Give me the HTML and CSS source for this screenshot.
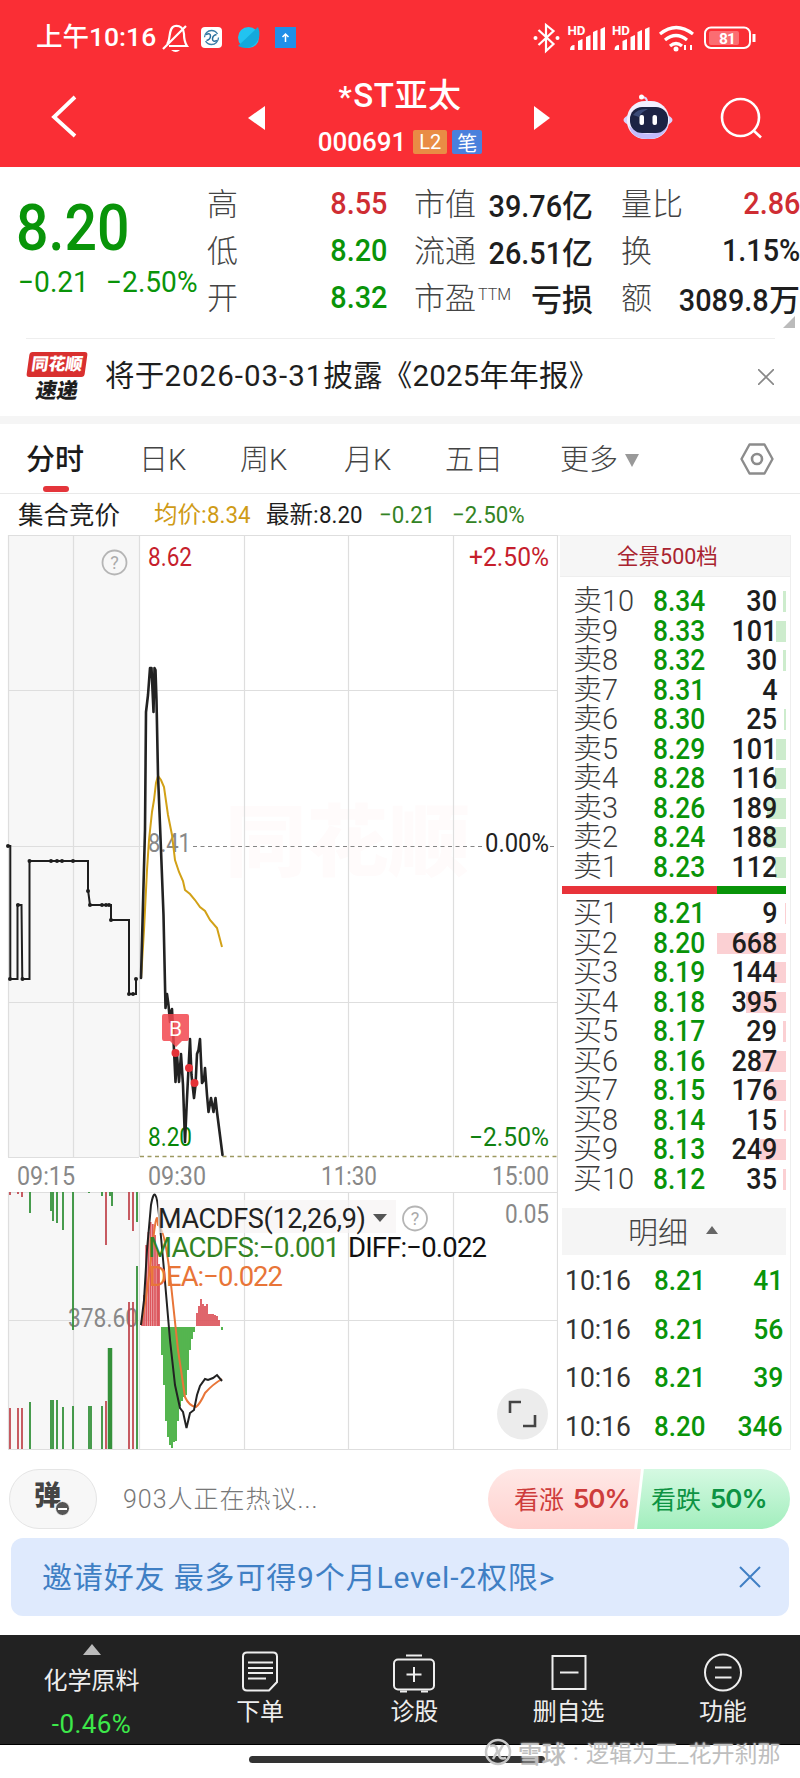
FILE: index.html
```html
<!DOCTYPE html>
<html lang="zh-CN">
<head>
<meta charset="utf-8">
<title>*ST亚太 000691</title>
<link rel="stylesheet" href="styles.css">
</head>
<body>
<header class="top">
  <div class="status">
    <span class="clock">上午10:16</span>
    <svg class="status-left" width="138" height="32" viewBox="160 22 138 32">
      <path d="M167 44c4-4 1-17 8-18q8-1 9 8c0 6 1 9 3 12H169M163 49l23-23" fill="none" stroke="#fff" stroke-width="2.2"/>
      <path d="M171 50h9q-4 4-9 0z" fill="#fff"/>
      <rect x="201" y="27" width="21" height="21" rx="4" fill="#fff"/>
      <circle cx="211.500" cy="37.500" r="7" fill="none" stroke="#3c7fa8" stroke-width="1.300" stroke-dasharray="18 4"/>
      <path d="M206 34.500q4.500-2 4.500 1.500t-4 4.500M217 40.500q-4.500 2-4.500-1.500t4-4.500" fill="none" stroke="#2a6f9c" stroke-width="1.500"/>
      <circle cx="248.500" cy="37.500" r="10.500" fill="#22c3f0"/>
      <path d="M238 46L258 27q4 10-3 17t-17 2z" fill="#13a9dc"/>
      <rect x="275" y="27" width="21" height="21" fill="#1f8fe8"/>
      <path d="M285.500 42v-8M282.500 37l3-3 3 3" fill="none" stroke="#fff" stroke-width="1.500"/>
    </svg>
    <svg class="status-right" width="226" height="32" viewBox="532 22 226 32">
      <path d="M538.500 30l15 14-7.500 7V25l7.500 6-15 14" fill="none" stroke="#fff" stroke-width="2.200"/>
      <circle cx="535.500" cy="38" r="2" fill="#fff"/><circle cx="557.500" cy="38" r="2" fill="#fff"/>
      <g fill="#fff">
        <text x="567.500" y="35" font-size="12" font-weight="700" textLength="18" lengthAdjust="spacingAndGlyphs">HD</text>
        <text x="612" y="35" font-size="12" font-weight="700" textLength="18" lengthAdjust="spacingAndGlyphs">HD</text>
        <path id="sig" d="M570 50q0-5 4.500-5v5zM578 41q4-2 4.500-2v11H578zM586 37q4-2 4.500-2v15H586zM593 32q4-2 4.500-2v20H593zM600.500 29q4-2 4.500-2v23h-4.500z"/>
        <use href="#sig" x="44.500"/>
      </g>
      <g fill="none" stroke="#fff" stroke-width="3.200"><path d="M660 34q16-13 33 0M665 40q11-9 22 0M670 46q6-5 12 0"/></g>
      <circle cx="676" cy="49" r="2.500" fill="#fff"/>
      <path d="M685 45v5M691 45v5" stroke="#fff" stroke-width="2"/>
      <rect x="705" y="27.500" width="45" height="20.500" rx="6" fill="none" stroke="#fff" stroke-width="2"/>
      <rect x="709" y="31" width="30" height="14" rx="2" fill="#fff" opacity=".3"/>
      <path d="M754 34v8" stroke="#fff" stroke-width="3"/>
      <text x="719" y="43.500" font-size="15.500" font-weight="700" fill="#fff" textLength="17">81</text>
    </svg>
  </div>
  <div class="titlebar">
    <svg class="back" width="30" height="46" viewBox="50 94 30 46"><path d="M75 97L54 117l21 19" fill="none" stroke="#fff" stroke-width="3.800"/></svg>
    <svg class="prev" width="18" height="26" viewBox="0 0 18 26"><path d="M17 1v24L0 13z" fill="#fff"/></svg>
    <div class="name">
      <div class="stock"><span class="star">*</span>ST亚太</div>
      <div class="code"><span>000691</span><b class="l2">L2</b><b class="bi">笔</b></div>
    </div>
    <svg class="next" width="18" height="26" viewBox="0 0 18 26"><path d="M1 1v24L17 13z" fill="#fff"/></svg>
    <svg class="robot" width="50" height="48" viewBox="623 93 50 48">
      <path d="M647 102q0-5-5-5" fill="none" stroke="#dcd7ff" stroke-width="2"/><circle cx="641.500" cy="97" r="2.500" fill="#fff"/>
      <ellipse cx="648" cy="120" rx="24.500" ry="8" fill="#d8d5ff"/><rect x="627" y="101" width="42" height="38" rx="18" fill="#f2efff"/>
      <path d="M629 126q19 16 39-1-4 14-20 14t-19-13z" fill="#c3bcfb"/>
      <rect x="630" y="107" width="38" height="26" rx="12" fill="#1c2344"/><path d="M633 115q5-7 15-6-7 3-9 8z" fill="#3b4b78"/>
      <rect x="639.500" y="115" width="4.500" height="10" rx="2" fill="#fff"/><rect x="652.500" y="115" width="4.500" height="10" rx="2" fill="#fff"/>
    </svg>
    <svg class="search" width="44" height="44" viewBox="719 96 44 44"><g fill="none" stroke="#fff" stroke-width="2.600"><circle cx="740.500" cy="117.500" r="18.500"/><path d="M753 130l8 7.500"/></g></svg>
  </div>
</header>

<section class="quote">
  <div class="last"><div class="big"><span class="num">8.20</span></div>
    <div class="chg"><span class="num">−0.21</span><span class="num pct">−2.50%</span></div></div>
  <dl class="col c1">
    <div><dt>高</dt><dd class="red"><span class="num">8.55</span></dd></div>
    <div><dt>低</dt><dd class="green"><span class="num">8.20</span></dd></div>
    <div><dt>开</dt><dd class="green"><span class="num">8.32</span></dd></div>
  </dl>
  <dl class="col c2">
    <div><dt>市值</dt><dd><span class="num">39.76</span>亿</dd></div>
    <div><dt>流通</dt><dd><span class="num">26.51</span>亿</dd></div>
    <div><dt>市盈<sup>TTM</sup></dt><dd>亏损</dd></div>
  </dl>
  <dl class="col c3">
    <div><dt>量比</dt><dd class="red"><span class="num">2.86</span></dd></div>
    <div><dt>换</dt><dd><span class="num">1.15%</span></dd></div>
    <div><dt>额</dt><dd><span class="num">3089.8</span>万</dd></div>
  </dl>
  <i class="corner"></i>
</section>

<section class="notice">
  <div class="express"><span class="brand">同花顺</span><span class="fast">速递</span></div>
  <p>将于<span class="d1">2026-03-31</span>披露《2025年年报》</p>
  <svg width="16" height="16" viewBox="0 0 16 16"><path d="M0 0l16 16M16 0L0 16" stroke="#888" stroke-width="1.600"/></svg>
</section>

<nav class="tabs">
  <a class="on">分时</a><a>日K</a><a>周K</a><a>月K</a><a>五日</a><a>更多<i></i></a>
  <svg width="34" height="32" viewBox="0 0 34 32"><path d="M9.500 1.500h15L32.500 16l-8 14.500h-15L1.500 16z" fill="none" stroke="#8c8c8c" stroke-width="2.400" stroke-linejoin="round"/><circle cx="17" cy="16" r="5" fill="none" stroke="#8c8c8c" stroke-width="2.600"/></svg>
</nav>

<div class="info">
  <span class="auction">集合竞价</span><span class="avg">均价:<span class="num">8.34</span></span><span class="new">最新:<span class="num">8.20</span></span><span class="num g1">−0.21</span><span class="num g2">−2.50%</span>
</div>

<main class="market">
<svg class="chart" width="558" height="923" viewBox="0 527 558 923">
  <path d="M8 535h131.500v622H8zM8 1192h131.500v257H8z" fill="#f7f7f7"/>
  <text x="225" y="870" font-size="78" font-weight="900" fill="#fffbfb" textLength="245" lengthAdjust="spacingAndGlyphs">同花顺</text>
  <g fill="none" stroke="#dedede" stroke-width="1.200">
    <path d="M8 535.500h550M8 690.500h550M8 1002.500h550M8 1157.500h131M8 846.500h138M8 1192.500h550M8 1320.500h550M8 1449.500h550"/>
    <path d="M8.500 535v622M73.500 535v622M139.500 535v622M244.500 535v622M348.500 535v622M453.500 535v622M8.500 1192v257M73.500 1192v257M139.500 1192v257M244.500 1192v257M348.500 1192v257M453.500 1192v257M557.500 535v914"/>
  </g>
  <path d="M193 846.500h290M550 846.500h6" stroke="#858585" stroke-width="1.200" stroke-dasharray="4 3.500"/>
  <path d="M140 1156.500h417" stroke="#9d9960" stroke-width="1.400" stroke-dasharray="4 3.500"/>
  <g font-size="25.500">
    <text x="148" y="1146" fill="#078607" textLength="44" lengthAdjust="spacingAndGlyphs">8.20</text>
    <text x="148" y="566" fill="#c61e2c" textLength="44" lengthAdjust="spacingAndGlyphs">8.62</text>
    <text x="148" y="852" fill="#888" textLength="43" lengthAdjust="spacingAndGlyphs">8.41</text>
    <text x="469" y="566" fill="#c61e2c" textLength="80" lengthAdjust="spacingAndGlyphs">+2.50%</text>
    <text x="485" y="852" fill="#222" textLength="64" lengthAdjust="spacingAndGlyphs">0.00%</text>
    <text x="469" y="1146" fill="#118111" textLength="80" lengthAdjust="spacingAndGlyphs">−2.50%</text>
  </g>
  <g font-size="25" fill="#888">
    <text x="17" y="1185" textLength="58" lengthAdjust="spacingAndGlyphs">09:15</text>
    <text x="148" y="1185" textLength="58" lengthAdjust="spacingAndGlyphs">09:30</text>
    <text x="321" y="1185" textLength="56" lengthAdjust="spacingAndGlyphs">11:30</text>
    <text x="492" y="1185" textLength="57" lengthAdjust="spacingAndGlyphs">15:00</text>
    <text x="505" y="1223" textLength="44" lengthAdjust="spacingAndGlyphs">0.05</text>
    <text x="68" y="1327" textLength="70" lengthAdjust="spacingAndGlyphs">378.60</text>
  </g>
  <g fill="none" stroke="#b5b5b5" stroke-width="1.800"><circle cx="114.500" cy="562.500" r="12"/><circle cx="415" cy="1218.500" r="12"/></g>
  <g font-size="18" fill="#aaa" text-anchor="middle"><text x="114.500" y="569">?</text><text x="415" y="1225">?</text></g>
  <path d="M141 979L144 930 147 870 149 840 152 812 154 800 156 783 158 776 161 780 164 787 168 815 172 835 175 860 179 872 183 881 185 890 190 894 195 900 200 907 205 911 210 920 217 928 222 947" fill="none" stroke="#d2a117" stroke-width="2"/>
  <path d="M8 846h2.300v133h7.200v-74h4l.8 74h7.200V861H88v29l2 15h21v15h18v74h7v-15" fill="none" stroke="#1e1e1e" stroke-width="2"/>
  <g fill="#1e1e1e"><circle cx="8" cy="846" r="2"/><circle cx="10" cy="979" r="2"/><circle cx="18" cy="905" r="2"/><circle cx="22.500" cy="979" r="2"/><circle cx="29.500" cy="861" r="2"/><circle cx="51" cy="861" r="2"/><circle cx="57" cy="861" r="2"/><circle cx="62" cy="861" r="2"/><circle cx="73" cy="861" r="2"/><circle cx="88" cy="891" r="2"/><circle cx="90" cy="905" r="2"/><circle cx="102" cy="905" r="2"/><circle cx="106" cy="905" r="2"/><circle cx="109" cy="905" r="2"/><circle cx="111" cy="920" r="2"/><circle cx="129" cy="994" r="2"/><circle cx="133" cy="994" r="2"/><circle cx="136" cy="979" r="2"/></g>
  <path d="M141 978L145 830 146 712 148 695 150 668 151.500 668 152.500 690 153.500 712 154.500 668 155.500 670 156.500 700 158 775 161 850 163.500 915 165.500 1008 167 994 168.500 1005 170 1022 171 1012 172 1009 174 1050 175.500 1082 177 1055 179 1082 181 1054 183 1085 185 1142 187 1098 190 1039 191.500 1075 194 1098 195.500 1085 197 1054 198.500 1050 200 1039 202 1083 204 1080 205 1068 207 1095 208.500 1112 211 1098 213.500 1112 215.500 1098 217 1112 222.500 1155" fill="none" stroke="#222" stroke-width="2.600" stroke-linejoin="round" stroke-linecap="round"/>
  <path d="M164 1014h23q2 0 2 2v22q0 3-2 3h-5l-6 6-6-6h-6q-2 0-2-3v-22q0-2 2-2z" fill="#f2474f" opacity=".85"/>
  <text x="175.500" y="1036" font-size="21" fill="#fff" text-anchor="middle">B</text>
  <g fill="#e53238"><circle cx="175.500" cy="1053" r="4"/><circle cx="189" cy="1068" r="4"/><circle cx="194.500" cy="1083" r="4"/></g>

  <g fill="none" stroke-width="1.800">
    <path d="M10 1192v3M18 1192v2M22 1192v5M106 1192v53M129 1192v28M133 1192v39M10 1449v-41M18 1449v-41M22 1449v-41M106 1449v-48M129 1449v-147M133 1449v-147" stroke="#c14a51"/>
    <path d="M30 1192v21M51 1192v19M53 1192v29M57 1192v31M63 1192v38M73 1192v138M89 1192v1M102 1192v4M110 1192v4M112 1192v14M137 1192v30M30 1449v-47M51 1449v-49M53 1449v-49M57 1449v-49M63 1449v-42M73 1449v-43M89 1449v-43M91 1449v-43M102 1449v-43M137 1449v-183" stroke="#34913a"/>
    <path d="M110 1449v-101" stroke="#34913a" stroke-width="4.500"/>
    <path d="M142 1326v-8M144 1326v-31M146.200 1326v-81M148.400 1326v-94M150.600 1326v-104M152.800 1326v-102M155 1326v-91M157.200 1326v-76M159 1326v-62M197 1326v-13M199 1326v-20M201 1326v-27M203 1326v-22M205 1326v-20M207 1326v-22M209 1326v-12M211 1326v-12M213 1326v-12M215 1326v-11M217 1326v-10M219 1326v-6" stroke="#dc555c"/>
    <path d="M162 1327v28M164 1327v58M166 1327v94M168 1327v110M170 1327v118M172 1327v121M174 1327v115M176 1327v114M178 1327v94M180 1327v79M182 1327v74M184 1327v70M186 1327v68M188 1327v43M190 1327v23M192 1327v12M194 1327v5M222 1327v3" stroke="#42ad3c"/>
  </g>
  <path d="M141 1325q6-28 11-75t6-25q6 1 12 50l8 75 7 47q4 9 11 10 4-3 9-14 8-9 17-14" fill="none" stroke="#e87538" stroke-width="2"/>
  <path d="M141 1325l3-25 3-50 4-45q4.500-25 8 10l5 55 6 70 5 45 5 23 3 4 3.500 16 3.500-15 4-3 3-15 3-9 5-7 3 1 5-2 4-3 5 6" fill="none" stroke="#222" stroke-width="2"/>
  <rect x="158" y="1200" width="238" height="33" fill="#f7f3f4" opacity=".7"/>
  <text x="158" y="1228" font-size="27" fill="#222" textLength="208">MACDFS(12,26,9)</text>
  <path d="M373 1214h14l-7 8z" fill="#555"/>
  <text x="148" y="1257" font-size="27.500" fill="#338324" textLength="192">MACDFS:−0.001</text>
  <text x="348" y="1257" font-size="27.500" fill="#111" textLength="139">DIFF:−0.022</text>
  <text x="149" y="1286" font-size="27.500" fill="#e87538" textLength="134">DEA:−0.022</text>
  <circle cx="522.500" cy="1414" r="25.500" fill="#ececec"/>
  <path d="M510 1413v-11h11M523 1426h12v-11" fill="none" stroke="#444" stroke-width="2.600"/>
</svg>

<aside class="book">
  <div class="book-head">全景500档</div>
  <div class="levels sell">
    <div><span>卖10</span><b>8.34</b><em>30</em><i style="width:3px"></i></div>
    <div><span>卖9</span><b>8.33</b><em>101</em><i style="width:10px"></i></div>
    <div><span>卖8</span><b>8.32</b><em>30</em><i style="width:3px"></i></div>
    <div><span>卖7</span><b>8.31</b><em>4</em><i style="width:0"></i></div>
    <div><span>卖6</span><b>8.30</b><em>25</em><i style="width:2px"></i></div>
    <div><span>卖5</span><b>8.29</b><em>101</em><i style="width:10px"></i></div>
    <div><span>卖4</span><b>8.28</b><em>116</em><i style="width:11px"></i></div>
    <div><span>卖3</span><b>8.26</b><em>189</em><i style="width:19px"></i></div>
    <div><span>卖2</span><b>8.24</b><em>188</em><i style="width:19px"></i></div>
    <div><span>卖1</span><b>8.23</b><em>112</em><i style="width:11px"></i></div>
  </div>
  <div class="ratio"></div>
  <div class="levels buy">
    <div><span>买1</span><b>8.21</b><em>9</em><i style="width:1px"></i></div>
    <div><span>买2</span><b>8.20</b><em>668</em><i style="width:69px"></i></div>
    <div><span>买3</span><b>8.19</b><em>144</em><i style="width:14px"></i></div>
    <div><span>买4</span><b>8.18</b><em>395</em><i style="width:40px"></i></div>
    <div><span>买5</span><b>8.17</b><em>29</em><i style="width:3px"></i></div>
    <div><span>买6</span><b>8.16</b><em>287</em><i style="width:29px"></i></div>
    <div><span>买7</span><b>8.15</b><em>176</em><i style="width:18px"></i></div>
    <div><span>买8</span><b>8.14</b><em>15</em><i style="width:2px"></i></div>
    <div><span>买9</span><b>8.13</b><em>249</em><i style="width:26px"></i></div>
    <div><span>买10</span><b>8.12</b><em>35</em><i style="width:3px"></i></div>
  </div>
  <div class="detail-head">明细<i></i></div>
  <div class="trades">
    <div><span>10:16</span><b>8.21</b><em>41</em></div>
    <div><span>10:16</span><b>8.21</b><em>56</em></div>
    <div><span>10:16</span><b>8.21</b><em>39</em></div>
    <div><span>10:16</span><b>8.20</b><em>346</em></div>
  </div>
</aside>
</main>

<section class="talk">
  <div class="danmu"><b>弹</b><i></i></div>
  <p>903人正在热议...</p>
  <div class="vote"><div class="up"><span>看涨</span><b>50%</b></div><div class="down"><span>看跌</span><b>50%</b></div></div>
</section>

<section class="invite">
  <p>邀请好友 最多可得9个月Level-2权限&gt;</p>
  <svg width="22" height="22" viewBox="0 0 22 22"><path d="M1 1l20 20M21 1L1 21" stroke="#3f7fc4" stroke-width="2"/></svg>
</section>

<nav class="bottom">
  <div class="sector"><i></i><span>化学原料</span><em>-0.46%</em></div>
  <div><svg width="40" height="42" viewBox="0 0 40 42"><g fill="none" stroke="#eee" stroke-width="2"><path d="M7 1.500h26q4 0 4 4V31l-8 8.500H7q-4 0-4-4v-30q0-4 4-4z"/><path d="M8 11.500h25M8 17h25M8 22h25M8 27.500h18"/></g></svg><span>下单</span></div>
  <div><svg width="44" height="42" viewBox="0 0 44 42"><g fill="none" stroke="#eee" stroke-width="2"><rect x="2" y="8.500" width="40" height="30" rx="4"/><path d="M14 4.500h16M22 16v15M14.500 23.500h15M8 40.500h7M29 40.500h7"/></g></svg><span>诊股</span></div>
  <div><svg width="40" height="42" viewBox="0 0 40 42"><g fill="none" stroke="#eee" stroke-width="2"><rect x="3.500" y="5" width="33" height="33"/><path d="M11 21.500h18.500"/></g></svg><span>删自选</span></div>
  <div><svg width="40" height="42" viewBox="0 0 40 42"><g fill="none" stroke="#eee" stroke-width="2"><circle cx="20" cy="21.500" r="18"/><path d="M12 16.500h16.500M12 26.500h16.500"/></g></svg><span>功能</span></div>
</nav>
<footer class="home"><div class="pill"></div>
  <div class="mark"><svg width="28" height="30" viewBox="0 0 28 30"><g fill="none" stroke="#c8c8c8" stroke-width="2.500"><circle cx="14" cy="15" r="12"/><path d="M6 9q8-2 7 6l-4 7M22 21q-8 2-7-6l4-7"/></g></svg><b>雪球</b><span class="colon">:</span><span>逻辑为王_花开刹那</span></div>
</footer>
</body>
</html>
```
FILE: styles.css
```css
* { box-sizing: border-box; margin: 0; padding: 0; }
body { width: 800px; height: 1778px; overflow: hidden; background: #fff; color: #1e1e1e; font-family: Roboto, "Noto Sans CJK SC", sans-serif; }
i, em { font-style: normal; }
svg { display: block; flex: none; }
svg text { font-family: Roboto, "Noto Sans CJK SC", sans-serif; }
.num { display: inline-block; transform: scaleX(.93); transform-origin: right; }
.red, .red .num { color: #cf2d33; }
.green { color: #099409; }

.top { height: 167px; background: #fa2e35; color: #fff; }
.status { height: 76px; padding: 0 42px 0 36px; display: flex; align-items: center; }
.clock { width: 124px; font-size: 26.500px; line-height: 30px; padding-bottom: 3px; white-space: nowrap; font-weight: 500; }
.status-right { margin-left: auto; }
.titlebar { height: 91px; display: flex; align-items: flex-start; }
.back { margin: 18px 0 0 50px; }
.prev { margin: 29px 0 0 168px; }
.name { width: 268px; height: 91px; text-align: center; }
.stock { height: 41px; line-height: 40px; font-size: 33px; font-weight: 500; letter-spacing: .5px; white-space: nowrap; }
.star { font-size: 30px; margin-right: 1px; }
.code { display: flex; align-items: center; justify-content: center; height: 50px; padding-bottom: 0; font-size: 26px; font-weight: 500; }
.code span { margin-right: 7px; }
.code b { display: flex; align-items: center; justify-content: center; height: 24px; font-size: 20px; font-weight: 400; border-radius: 2px; }
.l2 { width: 34px; background: #e98c45; margin-right: 5px; }
.bi { width: 30px; background: #4a80dc; }
.next { margin: 29px 0 0 -1px; }
.robot { margin: 17px 0 0 72px; }
.search { margin: 20px 0 0 46px; }

.quote { position: relative; height: 171px; display: flex; padding-top: 13px; }
.last { width: 207px; padding-left: 18px; color: #099409; }
.last .num { transform-origin: left; }
.big { height: 87px; line-height: 96px; font-size: 65px; font-weight: 500; }
.big .num { transform: scaleX(.88); margin-left: -2px; }
.chg { display: flex; font-size: 29px; line-height: 30px; }
.chg .num { width: 88px; white-space: nowrap; transform: scaleX(.97); }
.col > div { height: 47px; display: flex; align-items: center; justify-content: space-between; font-size: 31px; white-space: nowrap; }
dt { color: #444; font-weight: 300; padding-bottom: 5px; }
dd { font-weight: 500; padding-bottom: 1px; }
.c1 { width: 180px; }
.c2 { width: 179px; margin-left: 27px; }
.c3 { width: 179px; margin-left: 28px; }
.c2 .num, .c3 .num { margin-left: -12px; }
sup { font-size: 16px; vertical-align: 9px; line-height: 0; margin-left: 2px; }
.corner { position: absolute; right: 5px; bottom: 10px; border: 6px solid; border-color: transparent #bbb #bbb transparent; }

.notice { height: 86px; padding: 0 26px; display: flex; align-items: flex-start; border-bottom: 8px solid #f5f5f5; background: linear-gradient(#eee, #eee) 26px 0 / 749px 1px no-repeat; }
.express { width: 60px; margin: 14px 18px 0 1px; display: flex; flex-direction: column; align-items: center; }
.brand { width: 58px; height: 25px; line-height: 24px; border-radius: 3px; background: #d9302f; color: #fff; font-size: 17px; font-weight: 900; text-align: center; transform: skewX(-8deg); }
.fast { font-size: 21px; line-height: 22px; font-weight: 900; transform: skewX(-10deg); margin-top: 3px; }
.notice p { font-size: 29.500px; line-height: 76px; white-space: nowrap; letter-spacing: .2px; }
.d1 { letter-spacing: 1px; }
.notice svg { margin: 31px 0 0 auto; }

.tabs { position: relative; height: 70px; border-bottom: 1px solid #e9e9e9; display: flex; align-items: center; padding: 0 26px 0 26px; font-size: 29px; color: #444; }
.tabs a { position: relative; top: -2px; font-weight: 300; white-space: nowrap; }
.tabs .on { color: #1b1b1b; font-weight: 500; width: 113px; }
.tabs .on::after { content: ""; position: absolute; left: 17px; bottom: -14px; width: 26px; height: 6px; border-radius: 3px; background: #e4353b; }
.tabs a:nth-child(2) { width: 101px; }
.tabs a:nth-child(3) { width: 104px; }
.tabs a:nth-child(4) { width: 101px; }
.tabs a:nth-child(5) { width: 115px; }
.tabs a i { display: inline-block; border: 7.500px solid transparent; border-top: 13px solid #999; border-bottom: 0; margin-left: 7px; vertical-align: 3px; }
.tabs svg { margin-left: auto; }
.info { height: 33px; padding: 8px 0 0 18px; display: flex; align-items: center; font-size: 23.500px; line-height: 40px; white-space: nowrap; }
.info .num { transform-origin: left; font-size: 24px; }
.auction { width: 136px; font-size: 25.500px; }
.avg { width: 112px; color: #cf9b16; }
.new { width: 113px; }
.g1, .g2 { color: #338324; }
.g1 { width: 73px; }

.market { display: flex; height: 923px; }
.book { width: 233px; margin-top: 8px; border: 1px solid #eee; border-left: 0; height: 915px; padding: 0 4px; }
.book-head { height: 41px; margin: 0 -4px 0 -2px; padding-right: 15px; text-align: center; line-height: 41px; background: #f6f6f6; border-bottom: 1px solid #eee; color: #a92430; font-size: 21.500px; }
.levels { font-size: 29px; }
.sell { margin-top: 10px; }
.levels > div { position: relative; height: 29.500px; display: flex; align-items: center; line-height: 29.500px; }
.levels span { width: 79px; padding-left: 11px; font-weight: 300; color: #3c3c3c; white-space: nowrap; z-index: 1; }
.levels b, .trades b { width: 56px; margin-left: 12px; font-weight: 500; color: #099409; transform: scaleX(.91); transform-origin: left; z-index: 1; }
.levels em { margin-left: auto; margin-right: 9px; font-weight: 500; transform: scaleX(.93); transform-origin: right; z-index: 1; }
.levels i { position: absolute; right: 0; top: 4px; height: 21px; }
.sell i { background: #cdeccd; }
.buy i { background: #fbd0d3; }
.ratio { height: 8px; margin: 4px 0 5px; background: linear-gradient(90deg, #e8333a 69%, #099409 69%); }
.detail-head { display: flex; align-items: center; justify-content: center; height: 47px; margin-top: 14px; background: #f5f5f5; color: #444; font-size: 30px; font-weight: 300; padding: 0 2px 3px 0; }
.detail-head i { border: 6px solid transparent; border-bottom: 8px solid #666; border-top: 0; margin-left: 18px; }
.trades { padding-top: 1px; }
.trades > div { height: 48.800px; display: flex; align-items: center; font-size: 28.500px; padding: 0 3px; }
.trades span { width: 68px; color: #333; transform: scaleX(.93); transform-origin: left; }
.trades b { margin-left: 21px; }
.trades em { margin-left: auto; color: #099409; font-weight: 500; transform: scaleX(.93); transform-origin: right; }

.talk { height: 60px; margin: 19px 10px 0 9px; display: flex; align-items: center; }
.danmu { position: relative; width: 88px; height: 60px; border-radius: 30px; border: 1px solid #e5e5e5; background: #f7f7f7; padding: 7px 0 0 24px; font-size: 27px; line-height: 38px; color: #444; }
.danmu b { font-weight: 900; }
.danmu i { position: absolute; left: 45px; top: 31px; width: 15px; height: 15px; border-radius: 50%; border: 1px solid #f7f7f7; background: linear-gradient(#fff, #fff) center / 9px 2px no-repeat #555; }
.talk p { margin-left: 26px; padding-bottom: 4px; font-size: 25px; color: #777; font-weight: 300; letter-spacing: 1px; }
.vote { display: flex; margin-left: auto; width: 302px; height: 60px; border-radius: 30px; overflow: hidden; font-size: 25px; }
.vote div { display: flex; align-items: center; gap: 9px; white-space: nowrap; padding-bottom: 2px; }
.vote b { font-family: Inter, sans-serif; font-weight: 600; font-size: 26px; letter-spacing: -1px; }
.up { width: 153px; padding-left: 26px; color: #ce3c3b; background: linear-gradient(#ffe8e6, #ffd2cf); clip-path: polygon(0 0, 100% 0, 95.500% 100%, 0 100%); }
.down { width: 153px; margin-left: -4px; padding-left: 14px; color: #0d9343; background: linear-gradient(#d5f9e2, #a2eebd); clip-path: polygon(4.500% 0, 100% 0, 100% 100%, 0 100%); }

.invite { margin: 9px 11px 0; height: 78px; border-radius: 12px; background: #dfeafd; display: flex; align-items: center; justify-content: space-between; padding: 0 28px 0 31px; color: #3f7fc4; }
.invite p { font-size: 30px; white-space: nowrap; letter-spacing: .85px; padding-bottom: 4px; }

.bottom { margin-top: 19px; height: 110px; background: #222; border-bottom: 1px solid #000; display: grid; grid-template-columns: 183px repeat(4, 154.250px); color: #eee; }
.bottom > div { display: flex; flex-direction: column; align-items: center; padding-top: 16px; font-size: 24px; }
.bottom span { line-height: 34px; margin-top: 2px; }
.bottom .sector { padding-top: 9px; }
.sector i { border: 9.500px solid transparent; border-top: 0; border-bottom: 11px solid #bbb; }
.bottom .sector span { margin-top: 9px; }
.sector em { color: #3de84a; font-size: 26px; line-height: 32px; margin-top: 10px; letter-spacing: .4px; }
.home { position: relative; height: 33px; }
.pill { width: 296px; height: 7px; border-radius: 4px; background: #333; margin-left: 249px; transform: translateY(11px); }
.mark { position: absolute; left: 484px; top: -10px; display: flex; align-items: center; height: 34px; color: #bebebe; font-size: 24px; white-space: nowrap; text-shadow: 0 0 2px #fff; }
.mark b { margin-left: 6px; font-weight: 500; }
.mark .colon { width: 20px; padding-left: 7px; }
.mark span { font-size: 23px; }
```
